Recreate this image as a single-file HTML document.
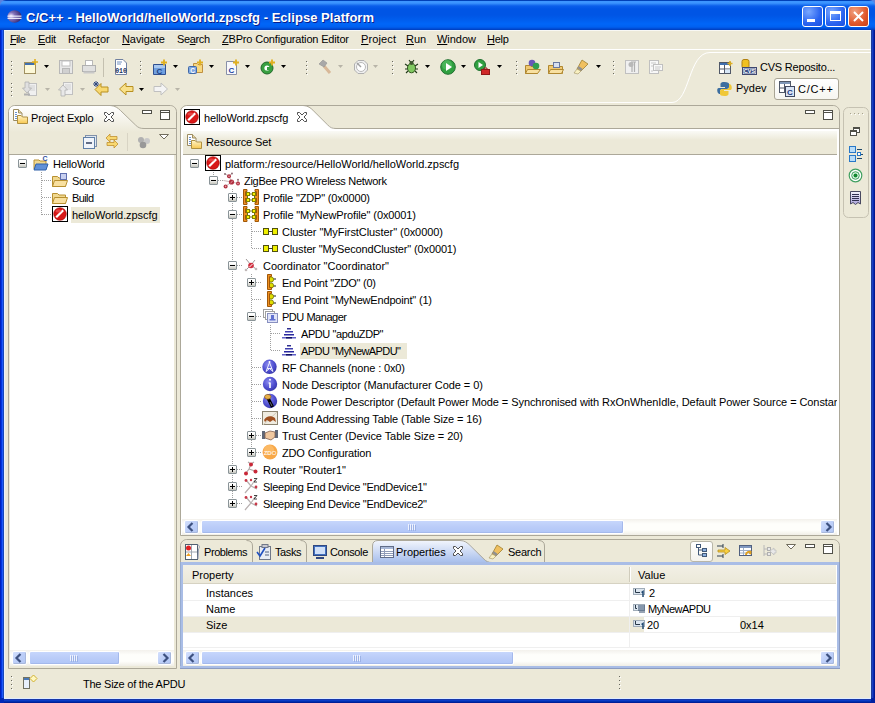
<!DOCTYPE html>
<html><head><meta charset="utf-8">
<style>
*{margin:0;padding:0;box-sizing:border-box}
html,body{width:875px;height:703px;overflow:hidden;background:#ECE9D8}
body{position:relative;font-family:"Liberation Sans",sans-serif;font-size:11px;color:#000}
.a{position:absolute}
.t{position:absolute;white-space:pre;line-height:13px;font-size:11px}
svg{position:absolute;overflow:visible}
</style></head><body>

<div class="a" style="left:0px;top:0px;width:8px;height:8px;background:#5A82E0"></div>
<div class="a" style="left:867px;top:0px;width:8px;height:8px;background:#5A82E0"></div>
<div class="a" style="left:0px;top:0px;width:875px;height:30px;background:linear-gradient(#0040B8 0,#0040B8 1px,#3C95FF 1px,#3C95FF 3px,#0A5EEA 6px,#0055E5 9px,#0055E5 15px,#005CEC 19px,#0066F8 24px,#0060F0 27px,#0048D0 29px,#003DB8 30px);border-radius:6px 6px 0 0"></div>
<div class="a" style="left:0px;top:30px;width:5px;height:673px;background:linear-gradient(90deg,#0020C0 0 1px,#0038E0 1px 2px,#2058F8 2px 3px,#1848B8 3px 4px,#E8F0FF 4px 5px)"></div>
<div class="a" style="left:870px;top:30px;width:5px;height:673px;background:linear-gradient(90deg,#DCEEFF 0 1px,#203C98 1px 2px,#1840C0 2px 3px,#0828B0 3px 4px,#001890 4px 5px)"></div>
<div class="a" style="left:0px;top:698px;width:875px;height:5px;background:linear-gradient(#E0ECFF 0 1px,#1838A8 1px 2px,#0A3CC8 2px 3px,#0030B0 3px 4px,#001E98 4px 5px)"></div>
<div class="a" style="left:0px;top:698px;width:4px;height:5px;background:#0028B8"></div>
<div class="a" style="left:871px;top:698px;width:4px;height:5px;background:#0020A0"></div>
<div class="a" style="left:4px;top:30px;width:867px;height:1px;background:#F8F8F4"></div>
<svg style="left:7px;top:10px" width="15" height="13" viewBox="0 0 15 13"><defs><radialGradient id="eg" cx=".25" cy=".45" r=".8"><stop offset="0" stop-color="#F0E8FF"/><stop offset=".35" stop-color="#8070B8"/><stop offset="1" stop-color="#2C1E68"/></radialGradient></defs><ellipse cx="7.5" cy="6.5" rx="7" ry="6.2" fill="url(#eg)"/><rect x="0.5" y="5.6" width="14" height="1.1" fill="#F4F4FF"/><rect x="0.5" y="7.8" width="14" height="1.1" fill="#F4F4FF"/></svg>
<div class="t" style="left:26px;top:10px;letter-spacing:0.033px;font-size:13px;font-weight:bold;color:#fff;line-height:15px;text-shadow:1px 1px 0 #0A1E8C">C/C++ - HelloWorld/helloWorld.zpscfg - Eclipse Platform</div>
<div class="a" style="left:802px;top:6px;width:21px;height:21px;border:1px solid #fff;border-radius:3px;background:radial-gradient(circle at 30% 25%,#7AA8FF,#2A64F0 60%,#1A50E0)"></div>
<div class="a" style="left:825px;top:6px;width:21px;height:21px;border:1px solid #fff;border-radius:3px;background:radial-gradient(circle at 30% 25%,#7AA8FF,#2A64F0 60%,#1A50E0)"></div>
<div class="a" style="left:848px;top:6px;width:21px;height:21px;border:1px solid #fff;border-radius:3px;background:radial-gradient(circle at 30% 25%,#F0A080,#E0582A 60%,#C84018)"></div>
<div class="a" style="left:807px;top:19px;width:8px;height:3px;background:#fff"></div>
<div class="a" style="left:830px;top:11px;width:11px;height:10px;border:1px solid #fff;border-top-width:3px"></div>
<svg style="left:848px;top:6px" width="21" height="21" viewBox="0 0 21 21"><path d="M6 6L15 15M15 6L6 15" stroke="#fff" stroke-width="2"/></svg>
<div class="t" style="left:10px;top:33px;letter-spacing:-0.650px;"><u>F</u>ile</div>
<div class="t" style="left:38px;top:33px;letter-spacing:-0.290px;"><u>E</u>dit</div>
<div class="t" style="left:68px;top:33px;letter-spacing:0.015px;">Refac<u>t</u>or</div>
<div class="t" style="left:122px;top:33px;letter-spacing:-0.091px;"><u>N</u>avigate</div>
<div class="t" style="left:177px;top:33px;letter-spacing:-0.375px;">Se<u>a</u>rch</div>
<div class="t" style="left:222px;top:33px;letter-spacing:-0.179px;"><u>Z</u>BPro Configuration Editor</div>
<div class="t" style="left:361px;top:33px;letter-spacing:0.125px;"><u>P</u>roject</div>
<div class="t" style="left:406px;top:33px;letter-spacing:-0.002px;"><u>R</u>un</div>
<div class="t" style="left:437px;top:33px;letter-spacing:-0.028px;"><u>W</u>indow</div>
<div class="t" style="left:487px;top:33px;letter-spacing:-0.280px;"><u>H</u>elp</div>
<div class="a" style="left:4px;top:49px;width:867px;height:1px;background:#FFFFFF"></div>
<div class="a" style="left:11px;top:61px;width:1px;height:1px;background:#686860"></div>
<div class="a" style="left:12px;top:62px;width:1px;height:1px;background:#FFFFFF"></div>
<div class="a" style="left:11px;top:65px;width:1px;height:1px;background:#686860"></div>
<div class="a" style="left:12px;top:66px;width:1px;height:1px;background:#FFFFFF"></div>
<div class="a" style="left:11px;top:69px;width:1px;height:1px;background:#686860"></div>
<div class="a" style="left:12px;top:70px;width:1px;height:1px;background:#FFFFFF"></div>
<div class="a" style="left:11px;top:73px;width:1px;height:1px;background:#686860"></div>
<div class="a" style="left:12px;top:74px;width:1px;height:1px;background:#FFFFFF"></div>
<div class="a" style="left:11px;top:83px;width:1px;height:1px;background:#686860"></div>
<div class="a" style="left:12px;top:84px;width:1px;height:1px;background:#FFFFFF"></div>
<div class="a" style="left:11px;top:87px;width:1px;height:1px;background:#686860"></div>
<div class="a" style="left:12px;top:88px;width:1px;height:1px;background:#FFFFFF"></div>
<div class="a" style="left:11px;top:91px;width:1px;height:1px;background:#686860"></div>
<div class="a" style="left:12px;top:92px;width:1px;height:1px;background:#FFFFFF"></div>
<div class="a" style="left:11px;top:95px;width:1px;height:1px;background:#686860"></div>
<div class="a" style="left:12px;top:96px;width:1px;height:1px;background:#FFFFFF"></div>
<div class="a" style="left:140px;top:61px;width:1px;height:1px;background:#686860"></div>
<div class="a" style="left:141px;top:62px;width:1px;height:1px;background:#FFFFFF"></div>
<div class="a" style="left:140px;top:65px;width:1px;height:1px;background:#686860"></div>
<div class="a" style="left:141px;top:66px;width:1px;height:1px;background:#FFFFFF"></div>
<div class="a" style="left:140px;top:69px;width:1px;height:1px;background:#686860"></div>
<div class="a" style="left:141px;top:70px;width:1px;height:1px;background:#FFFFFF"></div>
<div class="a" style="left:140px;top:73px;width:1px;height:1px;background:#686860"></div>
<div class="a" style="left:141px;top:74px;width:1px;height:1px;background:#FFFFFF"></div>
<div class="a" style="left:103px;top:58px;width:1px;height:19px;background:#C4C0B0"></div>
<div class="a" style="left:9px;top:106px;width:167px;height:562px;background:#ECE9D8"></div>
<svg style="left:0px;top:0px" width="875" height="703" viewBox="0 0 875 703"><defs><linearGradient id="tg1" gradientUnits="userSpaceOnUse" x1="0" y1="106" x2="0" y2="132"><stop offset="0" stop-color="#FFFFFF"/><stop offset="1" stop-color="#ECE9D8"/></linearGradient></defs><path d="M9 128V111Q9 106 14 106H110C115.00 106.00 118.00 108.39 120.50 110.78L135.50 124.65C138.00 127.04 140.00 128.00 144.00 128.00H176V154H9Z" fill="url(#tg1)"/><path d="M110 105.5C115.00 105.50 118.00 108.00 120.50 110.50L135.50 125.00C138.00 127.50 140.00 128.50 144.00 128.50H176" fill="none" stroke="#ACA899"/></svg>
<svg style="left:0px;top:0px" width="875" height="703" viewBox="0 0 875 703"><path d="M8.5 668.5V111.5C8.5 108.2 11.8 105.5 14.5 105.5H170.5C173.2 105.5 176.5 108.2 176.5 111.5V668.5H8.5Z" fill="none" stroke="#ACA899" stroke-width="1"/></svg>
<div class="a" style="left:9px;top:154px;width:167px;height:1px;background:#ACA899"></div>
<div class="a" style="left:10px;top:155px;width:164px;height:495px;background:#FFFFFF"></div>
<div class="a" style="left:181px;top:106px;width:658px;height:429px;background:#FFFFFF;border-radius:6px 6px 0 0"></div>
<svg style="left:0px;top:0px" width="875" height="703" viewBox="0 0 875 703"><path d="M303 106C307.85 106.00 310.76 108.39 313.19 110.78L327.75 124.65C330.18 127.04 332.12 128.00 336.00 128.00H839V106H303Z" fill="#ECE9D8"/><path d="M303 105.5C307.85 105.50 310.76 108.00 313.19 110.50L327.75 125.00C330.18 127.50 332.12 128.50 336.00 128.50H839" fill="none" stroke="#ACA899"/></svg>
<svg style="left:0px;top:0px" width="875" height="703" viewBox="0 0 875 703"><path d="M180.5 535.5V111.5C180.5 108.2 183.8 105.5 186.5 105.5H833.5C836.2 105.5 839.5 108.2 839.5 111.5V535.5H180.5Z" fill="none" stroke="#ACA899" stroke-width="1"/></svg>
<div class="a" style="left:183px;top:131px;width:654px;height:23px;background:linear-gradient(#FAFAF6,#ECE9D8 40%,#ECE9D8)"></div>
<div class="a" style="left:183px;top:154px;width:654px;height:1px;background:#ACA899"></div>
<div class="a" style="left:181px;top:540px;width:658px;height:128px;background:#ECE9D8"></div>
<svg style="left:0px;top:0px" width="875" height="703" viewBox="0 0 875 703"><path d="M180.5 668.5V545.5C180.5 542.2 183.8 539.5 186.5 539.5H833.5C836.2 539.5 839.5 542.2 839.5 545.5V668.5H180.5Z" fill="none" stroke="#ACA899" stroke-width="1"/></svg>
<svg style="left:0px;top:0px" width="875" height="703" viewBox="0 0 875 703"><defs><linearGradient id="tg2" x1="0" y1="0" x2="0" y2="1"><stop offset="0" stop-color="#F4F7FD"/><stop offset="1" stop-color="#A9C0EC"/></linearGradient></defs><path d="M372 562V546Q372 540 378 540H460C464.71 540.00 467.53 542.39 469.88 544.78L484.00 558.65C486.35 561.04 488.24 562.00 492.00 562.00Z" fill="url(#tg2)"/><path d="M372.5 562V546Q372.5 540.5 378 540.5H460C464.71 540.50 467.53 542.89 469.88 545.28L484.00 559.15C486.35 561.54 488.24 562.50 492.00 562.50" fill="none" stroke="#ACA899"/></svg>
<svg style="left:0px;top:0px" width="875" height="703" viewBox="0 0 875 703"><path d="M246.5 540.5Q252.5 540.5 252.5 546V562" fill="none" stroke="#ACA899"/></svg>
<svg style="left:0px;top:0px" width="875" height="703" viewBox="0 0 875 703"><path d="M300.5 540.5Q306.5 540.5 306.5 546V562" fill="none" stroke="#ACA899"/></svg>
<svg style="left:0px;top:0px" width="875" height="703" viewBox="0 0 875 703"><path d="M538.5 540.5Q544.5 540.5 544.5 546V562" fill="none" stroke="#ACA899"/></svg>
<div class="a" style="left:183px;top:565px;width:654px;height:101px;background:#FFFFFF"></div>
<svg style="left:0px;top:0px" width="875" height="703" viewBox="0 0 875 703"><rect x="843.5" y="107.5" width="25" height="110" rx="5" fill="#ECE9D8" stroke="#C6C2B2"/></svg>
<div class="a" style="left:11px;top:676px;width:1px;height:1px;background:#686860"></div>
<div class="a" style="left:12px;top:677px;width:1px;height:1px;background:#FFFFFF"></div>
<div class="a" style="left:11px;top:680px;width:1px;height:1px;background:#686860"></div>
<div class="a" style="left:12px;top:681px;width:1px;height:1px;background:#FFFFFF"></div>
<div class="a" style="left:11px;top:684px;width:1px;height:1px;background:#686860"></div>
<div class="a" style="left:12px;top:685px;width:1px;height:1px;background:#FFFFFF"></div>
<div class="a" style="left:11px;top:688px;width:1px;height:1px;background:#686860"></div>
<div class="a" style="left:12px;top:689px;width:1px;height:1px;background:#FFFFFF"></div>
<div class="t" style="left:83px;top:678px;letter-spacing:-0.242px;">The Size of the APDU</div>
<div class="a" style="left:619px;top:676px;width:1px;height:1px;background:#686860"></div>
<div class="a" style="left:620px;top:677px;width:1px;height:1px;background:#FFFFFF"></div>
<div class="a" style="left:619px;top:680px;width:1px;height:1px;background:#686860"></div>
<div class="a" style="left:620px;top:681px;width:1px;height:1px;background:#FFFFFF"></div>
<div class="a" style="left:619px;top:684px;width:1px;height:1px;background:#686860"></div>
<div class="a" style="left:620px;top:685px;width:1px;height:1px;background:#FFFFFF"></div>
<div class="a" style="left:619px;top:688px;width:1px;height:1px;background:#686860"></div>
<div class="a" style="left:620px;top:689px;width:1px;height:1px;background:#FFFFFF"></div>
<div class="a" style="left:214px;top:180px;width:10px;height:1px;background:repeating-linear-gradient(90deg,#A0A0A0 0 1px,transparent 1px 2px)"></div>
<div class="a" style="left:233px;top:197px;width:10px;height:1px;background:repeating-linear-gradient(90deg,#A0A0A0 0 1px,transparent 1px 2px)"></div>
<div class="a" style="left:233px;top:214px;width:10px;height:1px;background:repeating-linear-gradient(90deg,#A0A0A0 0 1px,transparent 1px 2px)"></div>
<div class="a" style="left:252px;top:231px;width:10px;height:1px;background:repeating-linear-gradient(90deg,#A0A0A0 0 1px,transparent 1px 2px)"></div>
<div class="a" style="left:252px;top:248px;width:10px;height:1px;background:repeating-linear-gradient(90deg,#A0A0A0 0 1px,transparent 1px 2px)"></div>
<div class="a" style="left:233px;top:265px;width:10px;height:1px;background:repeating-linear-gradient(90deg,#A0A0A0 0 1px,transparent 1px 2px)"></div>
<div class="a" style="left:252px;top:282px;width:10px;height:1px;background:repeating-linear-gradient(90deg,#A0A0A0 0 1px,transparent 1px 2px)"></div>
<div class="a" style="left:252px;top:299px;width:10px;height:1px;background:repeating-linear-gradient(90deg,#A0A0A0 0 1px,transparent 1px 2px)"></div>
<div class="a" style="left:252px;top:316px;width:10px;height:1px;background:repeating-linear-gradient(90deg,#A0A0A0 0 1px,transparent 1px 2px)"></div>
<div class="a" style="left:271px;top:333px;width:10px;height:1px;background:repeating-linear-gradient(90deg,#A0A0A0 0 1px,transparent 1px 2px)"></div>
<div class="a" style="left:271px;top:350px;width:10px;height:1px;background:repeating-linear-gradient(90deg,#A0A0A0 0 1px,transparent 1px 2px)"></div>
<div class="a" style="left:252px;top:367px;width:10px;height:1px;background:repeating-linear-gradient(90deg,#A0A0A0 0 1px,transparent 1px 2px)"></div>
<div class="a" style="left:252px;top:384px;width:10px;height:1px;background:repeating-linear-gradient(90deg,#A0A0A0 0 1px,transparent 1px 2px)"></div>
<div class="a" style="left:252px;top:401px;width:10px;height:1px;background:repeating-linear-gradient(90deg,#A0A0A0 0 1px,transparent 1px 2px)"></div>
<div class="a" style="left:252px;top:418px;width:10px;height:1px;background:repeating-linear-gradient(90deg,#A0A0A0 0 1px,transparent 1px 2px)"></div>
<div class="a" style="left:252px;top:435px;width:10px;height:1px;background:repeating-linear-gradient(90deg,#A0A0A0 0 1px,transparent 1px 2px)"></div>
<div class="a" style="left:252px;top:452px;width:10px;height:1px;background:repeating-linear-gradient(90deg,#A0A0A0 0 1px,transparent 1px 2px)"></div>
<div class="a" style="left:233px;top:469px;width:10px;height:1px;background:repeating-linear-gradient(90deg,#A0A0A0 0 1px,transparent 1px 2px)"></div>
<div class="a" style="left:233px;top:486px;width:10px;height:1px;background:repeating-linear-gradient(90deg,#A0A0A0 0 1px,transparent 1px 2px)"></div>
<div class="a" style="left:233px;top:503px;width:10px;height:1px;background:repeating-linear-gradient(90deg,#A0A0A0 0 1px,transparent 1px 2px)"></div>
<div class="a" style="left:213px;top:172px;width:1px;height:9px;background:repeating-linear-gradient(#A0A0A0 0 1px,transparent 1px 2px)"></div>
<div class="a" style="left:232px;top:189px;width:1px;height:315px;background:repeating-linear-gradient(#A0A0A0 0 1px,transparent 1px 2px)"></div>
<div class="a" style="left:251px;top:223px;width:1px;height:26px;background:repeating-linear-gradient(#A0A0A0 0 1px,transparent 1px 2px)"></div>
<div class="a" style="left:251px;top:274px;width:1px;height:179px;background:repeating-linear-gradient(#A0A0A0 0 1px,transparent 1px 2px)"></div>
<div class="a" style="left:270px;top:325px;width:1px;height:26px;background:repeating-linear-gradient(#A0A0A0 0 1px,transparent 1px 2px)"></div>
<div class="a" style="left:300px;top:343px;width:107px;height:16px;background:#ECE9D8"></div>
<div class="a" style="left:190px;top:159px;width:9px;height:9px;border:1px solid #8A9498;border-radius:1px;background:linear-gradient(#FFFFFF 20%,#E8E8E4 60%,#C4C4BC)"></div>
<div class="a" style="left:192px;top:163px;width:5px;height:1px;background:#000"></div>
<svg style="left:205px;top:155px" width="16" height="16" viewBox="0 0 16 16"><rect x="0.5" y="0.5" width="15" height="15" fill="#fff" stroke="#000"/><circle cx="8" cy="8" r="6.3" fill="#D81818" stroke="#A00000" stroke-width=".6"/><path fill="none" d="M4.2 11.2L11.2 4.2" stroke="#fff" stroke-width="2.2"/><ellipse cx="6.5" cy="5" rx="3" ry="1.6" fill="#F06060" opacity=".6"/></svg>
<div class="t" style="left:225px;top:158px;letter-spacing:-0.021px;width:612px;overflow:hidden">platform:/resource/HelloWorld/helloWorld.zpscfg</div>
<div class="a" style="left:209px;top:176px;width:9px;height:9px;border:1px solid #8A9498;border-radius:1px;background:linear-gradient(#FFFFFF 20%,#E8E8E4 60%,#C4C4BC)"></div>
<div class="a" style="left:211px;top:180px;width:5px;height:1px;background:#000"></div>
<svg style="left:224px;top:172px" width="16" height="16" viewBox="0 0 16 16"><path fill="none" d="M1 2L5 4L7.5 10L14 11.5M7.5 10L1.5 14.5M8 1.5L5 4M-0.5 8.5L7.5 10M14 7.7L14 11.5" stroke="#C8B8B8" stroke-width="1"/><circle cx="5" cy="4.2" r="2" fill="#B03040"/><circle cx="5" cy="4.2" r=".8" fill="#E8A0A8"/><circle cx="7.5" cy="10" r="2.6" fill="#B03040"/><path fill="none" d="M6.5 11L8.7 9" stroke="#E8A0A8" stroke-width="1"/><circle cx="14" cy="11.6" r="2" fill="#B03040"/><circle cx="14" cy="11.6" r=".8" fill="#E8A0A8"/><circle cx="1.6" cy="14.4" r="2" fill="#B03040"/><circle cx="1.6" cy="14.4" r=".8" fill="#E8A0A8"/><circle cx="1" cy="2" r=".9" fill="#806068"/><circle cx="8" cy="1.5" r=".9" fill="#806068"/><circle cx="14" cy="7.7" r=".9" fill="#806068"/></svg>
<div class="t" style="left:244px;top:175px;letter-spacing:-0.284px;width:593px;overflow:hidden">ZigBee PRO Wireless Network</div>
<div class="a" style="left:228px;top:193px;width:9px;height:9px;border:1px solid #8A9498;border-radius:1px;background:linear-gradient(#FFFFFF 20%,#E8E8E4 60%,#C4C4BC)"></div>
<div class="a" style="left:230px;top:197px;width:5px;height:1px;background:#000"></div>
<div class="a" style="left:232px;top:195px;width:1px;height:5px;background:#000"></div>
<svg style="left:243px;top:189px" width="16" height="16" viewBox="0 0 16 16"><path d="M0.5 0.5H4V2.5H2.5V13.5H4V15.5H0.5Z" fill="#F09020" stroke="#A05808" stroke-width="1"/><path d="M15.5 0.5H12V2.5H13.5V13.5H12V15.5H15.5Z" fill="#F09020" stroke="#A05808" stroke-width="1"/><rect x="2" y="7" width="2" height="2" fill="#F09020"/><rect x="12" y="7" width="2" height="2" fill="#F09020"/><path fill="none" d="M6 5H10M6 11H10M4.5 6.5V9.5M11.5 6.5V9.5" stroke="#707010" stroke-width="1"/><rect x="3.5" y="3.5" width="3" height="3" fill="#F8F000" stroke="#808000" stroke-width="1"/><rect x="9.5" y="3.5" width="3" height="3" fill="#F8F000" stroke="#808000" stroke-width="1"/><rect x="3.5" y="9.5" width="3" height="3" fill="#F8F000" stroke="#808000" stroke-width="1"/><rect x="9.5" y="9.5" width="3" height="3" fill="#F8F000" stroke="#808000" stroke-width="1"/></svg>
<div class="t" style="left:263px;top:192px;letter-spacing:-0.167px;width:574px;overflow:hidden">Profile "ZDP" (0x0000)</div>
<div class="a" style="left:228px;top:210px;width:9px;height:9px;border:1px solid #8A9498;border-radius:1px;background:linear-gradient(#FFFFFF 20%,#E8E8E4 60%,#C4C4BC)"></div>
<div class="a" style="left:230px;top:214px;width:5px;height:1px;background:#000"></div>
<svg style="left:243px;top:206px" width="16" height="16" viewBox="0 0 16 16"><path d="M0.5 0.5H4V2.5H2.5V13.5H4V15.5H0.5Z" fill="#F09020" stroke="#A05808" stroke-width="1"/><path d="M15.5 0.5H12V2.5H13.5V13.5H12V15.5H15.5Z" fill="#F09020" stroke="#A05808" stroke-width="1"/><rect x="2" y="7" width="2" height="2" fill="#F09020"/><rect x="12" y="7" width="2" height="2" fill="#F09020"/><path fill="none" d="M6 5H10M6 11H10M4.5 6.5V9.5M11.5 6.5V9.5" stroke="#707010" stroke-width="1"/><rect x="3.5" y="3.5" width="3" height="3" fill="#F8F000" stroke="#808000" stroke-width="1"/><rect x="9.5" y="3.5" width="3" height="3" fill="#F8F000" stroke="#808000" stroke-width="1"/><rect x="3.5" y="9.5" width="3" height="3" fill="#F8F000" stroke="#808000" stroke-width="1"/><rect x="9.5" y="9.5" width="3" height="3" fill="#F8F000" stroke="#808000" stroke-width="1"/></svg>
<div class="t" style="left:263px;top:209px;letter-spacing:-0.113px;width:574px;overflow:hidden">Profile "MyNewProfile" (0x0001)</div>
<svg style="left:262px;top:223px" width="16" height="16" viewBox="0 0 16 16"><rect x="1.5" y="5.5" width="5" height="6" fill="#F0F000" stroke="#505010"/><rect x="10.5" y="5.5" width="5" height="6" fill="#F0F000" stroke="#505010"/><path fill="none" d="M6.5 8.5H10.5" stroke="#404010"/></svg>
<div class="t" style="left:282px;top:226px;letter-spacing:-0.065px;width:555px;overflow:hidden">Cluster "MyFirstCluster" (0x0000)</div>
<svg style="left:262px;top:240px" width="16" height="16" viewBox="0 0 16 16"><rect x="1.5" y="5.5" width="5" height="6" fill="#F0F000" stroke="#505010"/><rect x="10.5" y="5.5" width="5" height="6" fill="#F0F000" stroke="#505010"/><path fill="none" d="M6.5 8.5H10.5" stroke="#404010"/></svg>
<div class="t" style="left:282px;top:243px;letter-spacing:-0.136px;width:555px;overflow:hidden">Cluster "MySecondCluster" (0x0001)</div>
<div class="a" style="left:228px;top:261px;width:9px;height:9px;border:1px solid #8A9498;border-radius:1px;background:linear-gradient(#FFFFFF 20%,#E8E8E4 60%,#C4C4BC)"></div>
<div class="a" style="left:230px;top:265px;width:5px;height:1px;background:#000"></div>
<svg style="left:243px;top:257px" width="16" height="16" viewBox="0 0 16 16"><path fill="none" d="M3 2L8 8L13 12M8 8L3 13M8 8L12 3" stroke="#A09898" stroke-width="1"/><circle cx="8" cy="8.5" r="2.8" fill="#D03040"/><path fill="none" d="M6.5 10L9.5 7" stroke="#fff" stroke-width="1"/><circle cx="3" cy="13" r="1.3" fill="#C0B8B8"/><circle cx="13" cy="12" r="1.3" fill="#C0B8B8"/></svg>
<div class="t" style="left:263px;top:260px;letter-spacing:0.007px;width:574px;overflow:hidden">Coordinator "Coordinator"</div>
<div class="a" style="left:247px;top:278px;width:9px;height:9px;border:1px solid #8A9498;border-radius:1px;background:linear-gradient(#FFFFFF 20%,#E8E8E4 60%,#C4C4BC)"></div>
<div class="a" style="left:249px;top:282px;width:5px;height:1px;background:#000"></div>
<div class="a" style="left:251px;top:280px;width:1px;height:5px;background:#000"></div>
<svg style="left:262px;top:274px" width="16" height="16" viewBox="0 0 16 16"><path d="M10 5H14M10 12H14" stroke="#202020" stroke-width="1"/><circle cx="9" cy="5.5" r="2.6" fill="#E0E000" stroke="#707000" stroke-width=".8"/><circle cx="9" cy="11.5" r="2.6" fill="#E0E000" stroke="#707000" stroke-width=".8"/><path d="M5.5 0.5H9.5V2.5H7.5V13.5H9.5V15.5H5.5Z" fill="#F09020" stroke="#A05808"/></svg>
<div class="t" style="left:282px;top:277px;letter-spacing:-0.239px;width:555px;overflow:hidden">End Point "ZDO" (0)</div>
<svg style="left:262px;top:291px" width="16" height="16" viewBox="0 0 16 16"><path d="M10 5H14M10 12H14" stroke="#202020" stroke-width="1"/><circle cx="9" cy="5.5" r="2.6" fill="#E0E000" stroke="#707000" stroke-width=".8"/><circle cx="9" cy="11.5" r="2.6" fill="#E0E000" stroke="#707000" stroke-width=".8"/><path d="M5.5 0.5H9.5V2.5H7.5V13.5H9.5V15.5H5.5Z" fill="#F09020" stroke="#A05808"/></svg>
<div class="t" style="left:282px;top:294px;letter-spacing:-0.185px;width:555px;overflow:hidden">End Point "MyNewEndpoint" (1)</div>
<div class="a" style="left:247px;top:312px;width:9px;height:9px;border:1px solid #8A9498;border-radius:1px;background:linear-gradient(#FFFFFF 20%,#E8E8E4 60%,#C4C4BC)"></div>
<div class="a" style="left:249px;top:316px;width:5px;height:1px;background:#000"></div>
<svg style="left:262px;top:308px" width="16" height="16" viewBox="0 0 16 16"><rect x="1.5" y="1.5" width="9" height="8" fill="#fff" stroke="#A0A0A0"/><rect x="3.5" y="3.5" width="9" height="8" fill="#fff" stroke="#A0A0A0"/><rect x="5.5" y="5.5" width="10" height="9" fill="#E0E4F8" stroke="#8890C0"/><rect x="9" y="7" width="3" height="4" fill="#6070D0"/><rect x="7.5" y="11" width="6" height="1.5" fill="#6070D0"/></svg>
<div class="t" style="left:282px;top:311px;letter-spacing:-0.470px;width:555px;overflow:hidden">PDU Manager</div>
<svg style="left:281px;top:325px" width="16" height="16" viewBox="0 0 16 16"><rect x="6" y="3" width="4" height="1.5" fill="#303090"/><rect x="4" y="6" width="8" height="1.5" fill="#4040B0"/><rect x="3" y="9" width="10" height="1.5" fill="#2828A0"/><rect x="1" y="12" width="14" height="1.5" fill="#6060C8"/><rect x="5" y="12" width="6" height="1.5" fill="#101060"/></svg>
<div class="t" style="left:301px;top:328px;letter-spacing:-0.416px;width:536px;overflow:hidden">APDU "apduZDP"</div>
<svg style="left:281px;top:342px" width="16" height="16" viewBox="0 0 16 16"><rect x="6" y="3" width="4" height="1.5" fill="#303090"/><rect x="4" y="6" width="8" height="1.5" fill="#4040B0"/><rect x="3" y="9" width="10" height="1.5" fill="#2828A0"/><rect x="1" y="12" width="14" height="1.5" fill="#6060C8"/><rect x="5" y="12" width="6" height="1.5" fill="#101060"/></svg>
<div class="t" style="left:301px;top:345px;letter-spacing:-0.578px;width:536px;overflow:hidden">APDU "MyNewAPDU"</div>
<svg style="left:262px;top:359px" width="16" height="16" viewBox="0 0 16 16"><defs><radialGradient id="bc" cx=".4" cy=".35" r=".7"><stop offset="0" stop-color="#8C8CF0"/><stop offset=".6" stop-color="#5050D0"/><stop offset="1" stop-color="#3434A8"/></radialGradient></defs><circle cx="7.5" cy="7.8" r="7.2" fill="url(#bc)"/><path fill="none" d="M7.5 3.5L4 12.5M7.5 3.5L11 12.5M5.2 9.5L9.8 9.5M4 12.5L7.5 9.5L11 12.5" stroke="#F0F0FF" stroke-width="1"/><circle cx="7.5" cy="3" r="1" fill="#fff"/></svg>
<div class="t" style="left:282px;top:362px;letter-spacing:-0.128px;width:555px;overflow:hidden">RF Channels (none : 0x0)</div>
<svg style="left:262px;top:376px" width="16" height="16" viewBox="0 0 16 16"><circle cx="8" cy="8" r="7.2" fill="url(#bc)"/><rect x="7.2" y="6.5" width="1.6" height="5.5" fill="#fff"/><rect x="6.5" y="6.5" width="1.5" height="1" fill="#fff"/><circle cx="8" cy="3.8" r="1" fill="#fff"/></svg>
<div class="t" style="left:282px;top:379px;letter-spacing:-0.044px;width:555px;overflow:hidden">Node Descriptor (Manufacturer Code = 0)</div>
<svg style="left:262px;top:393px" width="16" height="16" viewBox="0 0 16 16"><circle cx="8" cy="8" r="7.2" fill="url(#bc)"/><path fill="none" d="M6 5L10.5 14" stroke="#000" stroke-width="3.2"/><path fill="none" d="M8 9L10 13" stroke="#8080A0" stroke-width=".8"/><ellipse cx="5.8" cy="3.8" rx="3.2" ry="2.4" fill="#E8B048" stroke="#805010" stroke-width=".6"/></svg>
<div class="t" style="left:282px;top:396px;letter-spacing:-0.078px;width:555px;overflow:hidden">Node Power Descriptor (Default Power Mode = Synchronised with RxOnWhenIdle, Default Power Source = Constant Power)</div>
<svg style="left:262px;top:410px" width="16" height="16" viewBox="0 0 16 16"><rect x="0.5" y="1.5" width="15" height="13" fill="#F0ECE0" stroke="#8C8470"/><path fill="none" d="M1 15L15 2" stroke="#D0C8B8"/><path d="M2 10C4 6 9 5 13 8L14 12L11 10L8 12L5 10L3 12Z" fill="#A05020"/></svg>
<div class="t" style="left:282px;top:413px;letter-spacing:-0.112px;width:555px;overflow:hidden">Bound Addressing Table (Table Size = 16)</div>
<div class="a" style="left:247px;top:431px;width:9px;height:9px;border:1px solid #8A9498;border-radius:1px;background:linear-gradient(#FFFFFF 20%,#E8E8E4 60%,#C4C4BC)"></div>
<div class="a" style="left:249px;top:435px;width:5px;height:1px;background:#000"></div>
<div class="a" style="left:251px;top:433px;width:1px;height:5px;background:#000"></div>
<svg style="left:262px;top:427px" width="16" height="16" viewBox="0 0 16 16"><rect x="0" y="4" width="3" height="8" fill="#606878"/><rect x="13" y="3" width="3" height="8" fill="#606878"/><path d="M3 6L8 4L13 5V10L9 13L3 11Z" fill="#F0C8A0" stroke="#806050" stroke-width=".8"/></svg>
<div class="t" style="left:282px;top:430px;letter-spacing:-0.059px;width:555px;overflow:hidden">Trust Center (Device Table Size = 20)</div>
<div class="a" style="left:247px;top:448px;width:9px;height:9px;border:1px solid #8A9498;border-radius:1px;background:linear-gradient(#FFFFFF 20%,#E8E8E4 60%,#C4C4BC)"></div>
<div class="a" style="left:249px;top:452px;width:5px;height:1px;background:#000"></div>
<div class="a" style="left:251px;top:450px;width:1px;height:5px;background:#000"></div>
<svg style="left:262px;top:444px" width="16" height="16" viewBox="0 0 16 16"><circle cx="8" cy="8" r="7.5" fill="#F8A848"/><circle cx="7" cy="6" r="5" fill="#FCC070" opacity=".7"/><text x="8" y="10.5" font-size="6" font-family="Liberation Sans" fill="#fff" text-anchor="middle">ZDO</text></svg>
<div class="t" style="left:282px;top:447px;letter-spacing:-0.145px;width:555px;overflow:hidden">ZDO Configuration</div>
<div class="a" style="left:228px;top:465px;width:9px;height:9px;border:1px solid #8A9498;border-radius:1px;background:linear-gradient(#FFFFFF 20%,#E8E8E4 60%,#C4C4BC)"></div>
<div class="a" style="left:230px;top:469px;width:5px;height:1px;background:#000"></div>
<div class="a" style="left:232px;top:467px;width:1px;height:5px;background:#000"></div>
<svg style="left:243px;top:461px" width="16" height="16" viewBox="0 0 16 16"><path fill="none" d="M8 3L6 8L3 12M6 8L12 10M8 3L11 1M8 3L5 1" stroke="#B0A8A8" stroke-width="1.2"/><circle cx="8" cy="3.5" r="2" fill="#C82838"/><circle cx="3" cy="12.5" r="2" fill="#C82838"/><circle cx="12.5" cy="10.5" r="2" fill="#C82838"/></svg>
<div class="t" style="left:263px;top:464px;width:574px;overflow:hidden">Router "Router1"</div>
<div class="a" style="left:228px;top:482px;width:9px;height:9px;border:1px solid #8A9498;border-radius:1px;background:linear-gradient(#FFFFFF 20%,#E8E8E4 60%,#C4C4BC)"></div>
<div class="a" style="left:230px;top:486px;width:5px;height:1px;background:#000"></div>
<div class="a" style="left:232px;top:484px;width:1px;height:5px;background:#000"></div>
<svg style="left:243px;top:478px" width="16" height="16" viewBox="0 0 16 16"><path fill="none" d="M3 2L8 8L2 15M8 8L14 11M8 8L12 2" stroke="#B8B0B0" stroke-width="1.2"/><circle cx="3" cy="2.5" r="1.4" fill="#C83848"/><circle cx="8" cy="2" r="1.2" fill="#C83848"/><circle cx="13" cy="9" r="1.4" fill="#C83848"/><path d="M11 0.5H14L11 4H14" stroke="#303030" stroke-width=".9" fill="none"/></svg>
<div class="t" style="left:263px;top:481px;letter-spacing:-0.268px;width:574px;overflow:hidden">Sleeping End Device "EndDevice1"</div>
<div class="a" style="left:228px;top:499px;width:9px;height:9px;border:1px solid #8A9498;border-radius:1px;background:linear-gradient(#FFFFFF 20%,#E8E8E4 60%,#C4C4BC)"></div>
<div class="a" style="left:230px;top:503px;width:5px;height:1px;background:#000"></div>
<div class="a" style="left:232px;top:501px;width:1px;height:5px;background:#000"></div>
<svg style="left:243px;top:495px" width="16" height="16" viewBox="0 0 16 16"><path fill="none" d="M3 2L8 8L2 15M8 8L14 11M8 8L12 2" stroke="#B8B0B0" stroke-width="1.2"/><circle cx="3" cy="2.5" r="1.4" fill="#C83848"/><circle cx="8" cy="2" r="1.2" fill="#C83848"/><circle cx="13" cy="9" r="1.4" fill="#C83848"/><path d="M11 0.5H14L11 4H14" stroke="#303030" stroke-width=".9" fill="none"/></svg>
<div class="t" style="left:263px;top:498px;letter-spacing:-0.268px;width:574px;overflow:hidden">Sleeping End Device "EndDevice2"</div>
<div class="a" style="left:41px;top:172px;width:1px;height:43px;background:repeating-linear-gradient(#A0A0A0 0 1px,transparent 1px 2px)"></div>
<div class="a" style="left:42px;top:180px;width:10px;height:1px;background:repeating-linear-gradient(90deg,#A0A0A0 0 1px,transparent 1px 2px)"></div>
<div class="a" style="left:42px;top:197px;width:10px;height:1px;background:repeating-linear-gradient(90deg,#A0A0A0 0 1px,transparent 1px 2px)"></div>
<div class="a" style="left:42px;top:214px;width:10px;height:1px;background:repeating-linear-gradient(90deg,#A0A0A0 0 1px,transparent 1px 2px)"></div>
<div class="a" style="left:18px;top:159px;width:9px;height:9px;border:1px solid #8A9498;border-radius:1px;background:linear-gradient(#FFFFFF 20%,#E8E8E4 60%,#C4C4BC)"></div>
<div class="a" style="left:20px;top:163px;width:5px;height:1px;background:#000"></div>
<svg style="left:33px;top:155px" width="16" height="16" viewBox="0 0 16 16"><path d="M1 5H6L7 6H13V14H1Z" fill="#F0D890" stroke="#B89030"/><path d="M3 9H15L13 15H1Z" fill="#6090D8" stroke="#3060A8"/><text x="12" y="6" font-size="7" font-weight="bold" font-family="Liberation Sans" fill="#3050A0" text-anchor="middle">C</text></svg>
<div class="t" style="left:53px;top:158px;letter-spacing:-0.233px;">HelloWorld</div>
<svg style="left:52px;top:172px" width="16" height="16" viewBox="0 0 16 16"><path d="M0.5 4.5H5.5L7 6H13.5V14.5H0.5Z" fill="#F0D890" stroke="#B89030"/><path d="M2.5 8.5H15.5L13.5 14.5H0.5Z" fill="#F8E0A0" stroke="#B89030"/><rect x="8.5" y="1.5" width="6" height="6" fill="#C8D0F0" stroke="#6070B0"/></svg>
<div class="t" style="left:72px;top:175px;letter-spacing:-0.332px;">Source</div>
<svg style="left:52px;top:189px" width="16" height="16" viewBox="0 0 16 16"><path d="M0.5 4.5H5.5L7 6H13.5V14.5H0.5Z" fill="#F0D890" stroke="#B89030"/><path d="M2.5 8.5H15.5L13.5 14.5H0.5Z" fill="#F8E0A0" stroke="#B89030"/></svg>
<div class="t" style="left:72px;top:192px;letter-spacing:-0.592px;">Build</div>
<div class="a" style="left:71px;top:207px;width:89px;height:16px;background:#ECE9D8"></div>
<svg style="left:52px;top:206px" width="16" height="16" viewBox="0 0 16 16"><rect x="0.5" y="0.5" width="15" height="15" fill="#fff" stroke="#000"/><circle cx="8" cy="8" r="6.3" fill="#D81818" stroke="#A00000" stroke-width=".6"/><path fill="none" d="M4.2 11.2L11.2 4.2" stroke="#fff" stroke-width="2.2"/><ellipse cx="6.5" cy="5" rx="3" ry="1.6" fill="#F06060" opacity=".6"/></svg>
<div class="t" style="left:72px;top:209px;letter-spacing:-0.064px;">helloWorld.zpscfg</div>
<svg style="left:13px;top:109px" width="16" height="16" viewBox="0 0 16 16"><path d="M0.5 0.5H5.5L9 4V11.5H0.5Z" fill="#FFFFFF" stroke="#9C8C60"/><path d="M5.5 0.5V4H9" fill="#E8D8A8" stroke="#9C8C60"/><path d="M2 3.5H4M2 5.5H4M2 7.5H4M2 9.5H4" stroke="#6890D0" stroke-width="1"/><defs><linearGradient id="fg" x1="0" y1="0" x2="0" y2="1"><stop offset="0" stop-color="#FFF4C8"/><stop offset="1" stop-color="#F8C850"/></linearGradient></defs><path d="M4.5 6.5H8L9.5 8H14.5V14.5H4.5Z" fill="url(#fg)" stroke="#B09040"/></svg>
<div class="t" style="left:31px;top:112px;letter-spacing:-0.176px;">Project Explo</div>
<svg style="left:104px;top:112px" width="10" height="10" viewBox="0 0 10 10"><path d="M0.5 0.5H2.5L5 3L7.5 0.5H9.5V2.5L7 5L9.5 7.5V9.5H7.5L5 7L2.5 9.5H0.5V7.5L3 5L0.5 2.5Z" fill="#FFFFFF" stroke="#505050" stroke-width="1"/></svg>
<div class="a" style="left:142px;top:110px;width:10px;height:4px;border:1px solid #505048;background:#fff"></div>
<div class="a" style="left:160px;top:110px;width:10px;height:10px;border:1px solid #505048;background:#fff"></div>
<div class="a" style="left:161px;top:112px;width:8px;height:1px;background:#505048"></div>
<svg style="left:83px;top:135px" width="14" height="14" viewBox="0 0 14 14"><rect x="2.5" y="0.5" width="11" height="11" fill="#E0E8F0" stroke="#8090A8"/><rect x="0.5" y="2.5" width="11" height="11" fill="#F0F4FA" stroke="#6080A8"/><path fill="none" d="M3 8H9" stroke="#304060" stroke-width="1.5"/></svg>
<svg style="left:104px;top:133px" width="16" height="16" viewBox="0 0 16 16"><path d="M2 5L6 1V3.5H13V6.5H6V9Z" fill="#F8D870" stroke="#C09030" stroke-width=".8"/><path d="M14 11L10 7V9.5H3V12.5H10V15Z" fill="#F8D870" stroke="#C09030" stroke-width=".8"/></svg>
<div class="a" style="left:127px;top:133px;width:1px;height:18px;background:#D8D4C4"></div>
<svg style="left:136px;top:135px" width="16" height="14" viewBox="0 0 16 14"><circle cx="5" cy="5" r="3" fill="#B0B0B0"/><circle cx="11" cy="6" r="3" fill="#C8C8C8"/><circle cx="7" cy="10" r="3.3" fill="#989898"/></svg>
<svg style="left:159px;top:134px" width="10" height="6" viewBox="0 0 10 6"><path d="M0.5 0.5H9.5L5 5Z" fill="#fff" stroke="#706C5C"/></svg>
<svg style="left:184px;top:109px" width="16" height="16" viewBox="0 0 16 16"><rect x="0.5" y="0.5" width="15" height="15" fill="#fff" stroke="#000"/><circle cx="8" cy="8" r="6.3" fill="#D81818" stroke="#A00000" stroke-width=".6"/><path fill="none" d="M4.2 11.2L11.2 4.2" stroke="#fff" stroke-width="2.2"/><ellipse cx="6.5" cy="5" rx="3" ry="1.6" fill="#F06060" opacity=".6"/></svg>
<div class="t" style="left:204px;top:112px;letter-spacing:-0.145px;">helloWorld.zpscfg</div>
<svg style="left:297px;top:112px" width="10" height="10" viewBox="0 0 10 10"><path d="M0.5 0.5H2.5L5 3L7.5 0.5H9.5V2.5L7 5L9.5 7.5V9.5H7.5L5 7L2.5 9.5H0.5V7.5L3 5L0.5 2.5Z" fill="#FFFFFF" stroke="#505050" stroke-width="1"/></svg>
<div class="a" style="left:805px;top:110px;width:10px;height:4px;border:1px solid #505048;background:#fff"></div>
<div class="a" style="left:823px;top:110px;width:10px;height:10px;border:1px solid #505048;background:#fff"></div>
<div class="a" style="left:824px;top:112px;width:8px;height:1px;background:#505048"></div>
<svg style="left:187px;top:134px" width="16" height="16" viewBox="0 0 16 16"><path d="M0.5 0.5H5.5L9 4V11.5H0.5Z" fill="#FFFFFF" stroke="#9C8C60"/><path d="M5.5 0.5V4H9" fill="#E8D8A8" stroke="#9C8C60"/><path d="M2 3.5H4M2 5.5H4M2 7.5H4M2 9.5H4" stroke="#6890D0" stroke-width="1"/><defs><linearGradient id="fg" x1="0" y1="0" x2="0" y2="1"><stop offset="0" stop-color="#FFF4C8"/><stop offset="1" stop-color="#F8C850"/></linearGradient></defs><path d="M4.5 6.5H8L9.5 8H14.5V14.5H4.5Z" fill="url(#fg)" stroke="#B09040"/></svg>
<div class="t" style="left:206px;top:136px;letter-spacing:-0.132px;">Resource Set</div>
<svg style="left:185px;top:544px" width="16" height="16" viewBox="0 0 16 16"><rect x="0.5" y="0.5" width="12" height="15" fill="#fff" stroke="#506070"/><path fill="none" d="M6.5 1V15M1 8H12" stroke="#A0A8B0"/><circle cx="3.5" cy="4" r="2.5" fill="#E02020"/><path d="M1 12L3.5 9L6 12Z" fill="#F0A020"/><path d="M12.5 1C15 1 15 4 13.5 5L13 15" stroke="#98A0B8" fill="none"/></svg>
<div class="t" style="left:204px;top:546px;letter-spacing:-0.424px;">Problems</div>
<svg style="left:256px;top:544px" width="16" height="16" viewBox="0 0 16 16"><rect x="3.5" y="2.5" width="11" height="13" fill="#E8ECF4" stroke="#707888"/><rect x="6" y="0.5" width="6" height="3" fill="#C8C8D0" stroke="#707888"/><path d="M1 8L4 12L9 4" stroke="#2050C0" stroke-width="1.6" fill="none"/><path fill="none" d="M9 8H13M9 11H13" stroke="#506080"/></svg>
<div class="t" style="left:275px;top:546px;letter-spacing:-0.381px;">Tasks</div>
<svg style="left:312px;top:544px" width="16" height="16" viewBox="0 0 16 16"><rect x="1.5" y="1.5" width="13" height="10" fill="#4070C0" stroke="#304880"/><rect x="3" y="3" width="10" height="7" fill="#D0E0F8"/><path fill="none" d="M4 14H12" stroke="#304880" stroke-width="2"/></svg>
<div class="t" style="left:330px;top:546px;letter-spacing:-0.343px;">Console</div>
<svg style="left:379px;top:544px" width="16" height="16" viewBox="0 0 16 16"><rect x="1.5" y="2.5" width="13" height="11" fill="#fff" stroke="#606C88"/><rect x="2" y="3" width="12" height="2" fill="#A8B8D8"/><path fill="none" d="M2 7.5H14M2 9.5H14M2 11.5H14M5.5 5V13" stroke="#909CB8"/></svg>
<div class="t" style="left:396px;top:546px;letter-spacing:-0.049px;">Properties</div>
<svg style="left:453px;top:546px" width="10" height="10" viewBox="0 0 10 10"><path d="M0.5 0.5H2.5L5 3L7.5 0.5H9.5V2.5L7 5L9.5 7.5V9.5H7.5L5 7L2.5 9.5H0.5V7.5L3 5L0.5 2.5Z" fill="#FFFFFF" stroke="#505050" stroke-width="1"/></svg>
<svg style="left:488px;top:544px" width="16" height="16" viewBox="0 0 16 16"><path d="M9 1L15 5L8 12L4 10Z" fill="#F0C060" stroke="#A08030" stroke-width=".8"/><path d="M4 10L8 12L5 15L1 14Z" fill="#F8F0C0" stroke="#A09060" stroke-width=".6"/><path fill="none" d="M5 8L9 11" stroke="#909090" stroke-width="2.5"/></svg>
<div class="t" style="left:508px;top:546px;letter-spacing:-0.272px;">Search</div>
<div class="a" style="left:10px;top:650px;width:164px;height:16px;background:linear-gradient(#F3F1EC,#FEFEFB 30%,#FEFEFB 70%,#F0EEE6)"></div>
<div class="a" style="left:12px;top:651px;width:15px;height:14px;border:1px solid #FFFFFF;border-radius:2px;background:linear-gradient(135deg,#D4E0FC,#BCCEF8 50%,#B4C8F4);box-shadow:inset -1px -1px 0 #A8B8DC"></div>
<svg style="left:12px;top:651px" width="15" height="14" viewBox="0 0 15 14"><path d="M8.5 3L4.5 7L8.5 11" stroke="#3D5180" stroke-width="2.2" fill="none"/></svg>
<div class="a" style="left:157px;top:651px;width:15px;height:14px;border:1px solid #FFFFFF;border-radius:2px;background:linear-gradient(135deg,#D4E0FC,#BCCEF8 50%,#B4C8F4);box-shadow:inset -1px -1px 0 #A8B8DC"></div>
<svg style="left:157px;top:651px" width="15" height="14" viewBox="0 0 15 14"><path d="M6.5 3L10.5 7L6.5 11" stroke="#3D5180" stroke-width="2.2" fill="none"/></svg>
<div class="a" style="left:29px;top:651px;width:91px;height:14px;border:1px solid #FFFFFF;border-radius:2px;background:linear-gradient(#C6D6FC,#BACCF8 50%,#B0C6F8);box-shadow:inset -1px -1px 0 #A4B9EC"></div>
<div class="a" style="left:70px;top:655px;width:1px;height:6px;background:#EEF2FE"></div>
<div class="a" style="left:71px;top:656px;width:1px;height:6px;background:#9CB2E6"></div>
<div class="a" style="left:72px;top:655px;width:1px;height:6px;background:#EEF2FE"></div>
<div class="a" style="left:73px;top:656px;width:1px;height:6px;background:#9CB2E6"></div>
<div class="a" style="left:74px;top:655px;width:1px;height:6px;background:#EEF2FE"></div>
<div class="a" style="left:75px;top:656px;width:1px;height:6px;background:#9CB2E6"></div>
<div class="a" style="left:76px;top:655px;width:1px;height:6px;background:#EEF2FE"></div>
<div class="a" style="left:77px;top:656px;width:1px;height:6px;background:#9CB2E6"></div>
<div class="a" style="left:182px;top:519px;width:655px;height:16px;background:linear-gradient(#F3F1EC,#FEFEFB 30%,#FEFEFB 70%,#F0EEE6)"></div>
<div class="a" style="left:184px;top:520px;width:15px;height:14px;border:1px solid #FFFFFF;border-radius:2px;background:linear-gradient(135deg,#D4E0FC,#BCCEF8 50%,#B4C8F4);box-shadow:inset -1px -1px 0 #A8B8DC"></div>
<svg style="left:184px;top:520px" width="15" height="14" viewBox="0 0 15 14"><path d="M8.5 3L4.5 7L8.5 11" stroke="#3D5180" stroke-width="2.2" fill="none"/></svg>
<div class="a" style="left:820px;top:520px;width:15px;height:14px;border:1px solid #FFFFFF;border-radius:2px;background:linear-gradient(135deg,#D4E0FC,#BCCEF8 50%,#B4C8F4);box-shadow:inset -1px -1px 0 #A8B8DC"></div>
<svg style="left:820px;top:520px" width="15" height="14" viewBox="0 0 15 14"><path d="M6.5 3L10.5 7L6.5 11" stroke="#3D5180" stroke-width="2.2" fill="none"/></svg>
<div class="a" style="left:201px;top:520px;width:423px;height:14px;border:1px solid #FFFFFF;border-radius:2px;background:linear-gradient(#C6D6FC,#BACCF8 50%,#B0C6F8);box-shadow:inset -1px -1px 0 #A4B9EC"></div>
<div class="a" style="left:408px;top:524px;width:1px;height:6px;background:#EEF2FE"></div>
<div class="a" style="left:409px;top:525px;width:1px;height:6px;background:#9CB2E6"></div>
<div class="a" style="left:410px;top:524px;width:1px;height:6px;background:#EEF2FE"></div>
<div class="a" style="left:411px;top:525px;width:1px;height:6px;background:#9CB2E6"></div>
<div class="a" style="left:412px;top:524px;width:1px;height:6px;background:#EEF2FE"></div>
<div class="a" style="left:413px;top:525px;width:1px;height:6px;background:#9CB2E6"></div>
<div class="a" style="left:414px;top:524px;width:1px;height:6px;background:#EEF2FE"></div>
<div class="a" style="left:415px;top:525px;width:1px;height:6px;background:#9CB2E6"></div>
<div class="a" style="left:183px;top:650px;width:654px;height:16px;background:linear-gradient(#F3F1EC,#FEFEFB 30%,#FEFEFB 70%,#F0EEE6)"></div>
<div class="a" style="left:185px;top:651px;width:15px;height:14px;border:1px solid #FFFFFF;border-radius:2px;background:linear-gradient(135deg,#D4E0FC,#BCCEF8 50%,#B4C8F4);box-shadow:inset -1px -1px 0 #A8B8DC"></div>
<svg style="left:185px;top:651px" width="15" height="14" viewBox="0 0 15 14"><path d="M8.5 3L4.5 7L8.5 11" stroke="#3D5180" stroke-width="2.2" fill="none"/></svg>
<div class="a" style="left:820px;top:651px;width:15px;height:14px;border:1px solid #FFFFFF;border-radius:2px;background:linear-gradient(135deg,#D4E0FC,#BCCEF8 50%,#B4C8F4);box-shadow:inset -1px -1px 0 #A8B8DC"></div>
<svg style="left:820px;top:651px" width="15" height="14" viewBox="0 0 15 14"><path d="M6.5 3L10.5 7L6.5 11" stroke="#3D5180" stroke-width="2.2" fill="none"/></svg>
<div class="a" style="left:201px;top:651px;width:313px;height:14px;border:1px solid #FFFFFF;border-radius:2px;background:linear-gradient(#C6D6FC,#BACCF8 50%,#B0C6F8);box-shadow:inset -1px -1px 0 #A4B9EC"></div>
<div class="a" style="left:353px;top:655px;width:1px;height:6px;background:#EEF2FE"></div>
<div class="a" style="left:354px;top:656px;width:1px;height:6px;background:#9CB2E6"></div>
<div class="a" style="left:355px;top:655px;width:1px;height:6px;background:#EEF2FE"></div>
<div class="a" style="left:356px;top:656px;width:1px;height:6px;background:#9CB2E6"></div>
<div class="a" style="left:357px;top:655px;width:1px;height:6px;background:#EEF2FE"></div>
<div class="a" style="left:358px;top:656px;width:1px;height:6px;background:#9CB2E6"></div>
<div class="a" style="left:359px;top:655px;width:1px;height:6px;background:#EEF2FE"></div>
<div class="a" style="left:360px;top:656px;width:1px;height:6px;background:#9CB2E6"></div>
<div class="a" style="left:180px;top:562px;width:660px;height:3px;background:#A9BDE6"></div>
<div class="a" style="left:180px;top:562px;width:3px;height:107px;background:linear-gradient(90deg,#98ACD0 0 1px,#A9BDE6 1px)"></div>
<div class="a" style="left:837px;top:562px;width:3px;height:107px;background:linear-gradient(90deg,#A9BDE6 0 2px,#8C9CC0 2px)"></div>
<div class="a" style="left:180px;top:666px;width:660px;height:3px;background:linear-gradient(#A9BDE6 0 2px,#8C9CC0 2px)"></div>
<div class="a" style="left:183px;top:565px;width:653px;height:19px;background:linear-gradient(#F2F0E6,#EBE8D8)"></div>
<div class="a" style="left:183px;top:583px;width:653px;height:1px;background:#D6D2C2"></div>
<div class="a" style="left:629px;top:567px;width:1px;height:15px;background:#D0CCBC"></div>
<div class="a" style="left:630px;top:567px;width:1px;height:15px;background:#FFFFFF"></div>
<div class="t" style="left:192px;top:569px;">Property</div>
<div class="t" style="left:638px;top:569px;">Value</div>
<div class="a" style="left:183px;top:600px;width:653px;height:1px;background:#EFEFEF"></div>
<div class="t" style="left:206px;top:587px;">Instances</div>
<div class="a" style="left:183px;top:616px;width:653px;height:1px;background:#EFEFEF"></div>
<div class="t" style="left:206px;top:603px;">Name</div>
<div class="a" style="left:183px;top:617px;width:653px;height:15px;background:#ECE9D8"></div>
<div class="a" style="left:183px;top:632px;width:653px;height:1px;background:#EFEFEF"></div>
<div class="t" style="left:206px;top:619px;">Size</div>
<div class="a" style="left:629px;top:584px;width:1px;height:64px;background:#EFEFEF"></div>
<div class="a" style="left:183px;top:647px;width:653px;height:1px;background:#EFEFEF"></div>
<div class="a" style="left:644px;top:617px;width:96px;height:15px;background:#FFFFFF"></div>
<svg style="left:632px;top:587px" width="16" height="16" viewBox="0 0 16 16"><rect x="1.5" y="1.5" width="11" height="6" fill="#DCE6F0" stroke="#A0ACB8"/><path d="M3.5 2V5.5H8" stroke="#283848" fill="none"/><path d="M9.5 5.5L11 4.5V10" stroke="#204870" stroke-width="1.5" fill="none"/></svg>
<div class="t" style="left:649px;top:587px;">2</div>
<svg style="left:632px;top:603px" width="16" height="16" viewBox="0 0 16 16"><rect x="1.5" y="1.5" width="11" height="6" fill="#DCE6F0" stroke="#A0ACB8"/><path d="M3.5 2V5.5H5" stroke="#283848" fill="none"/><path fill="none" d="M6 3H13M6 5H13M6 7H13M7 9H13" stroke="#304868" stroke-width="1"/></svg>
<div class="t" style="left:648px;top:603px;letter-spacing:-0.529px;">MyNewAPDU</div>
<svg style="left:632px;top:619px" width="16" height="16" viewBox="0 0 16 16"><rect x="1.5" y="1.5" width="11" height="6" fill="#DCE6F0" stroke="#A0ACB8"/><path d="M3.5 2V5.5H8" stroke="#283848" fill="none"/><path d="M9.5 5.5L11 4.5V10" stroke="#204870" stroke-width="1.5" fill="none"/></svg>
<div class="t" style="left:647px;top:619px;">20</div>
<div class="t" style="left:740px;top:619px;">0x14</div>
<div class="a" style="left:690px;top:541px;width:23px;height:21px;border:1px solid #B8B6A8;border-radius:3px;background:linear-gradient(#FFFFFF,#F4F3EE)"></div>
<svg style="left:694px;top:543px" width="16" height="16" viewBox="0 0 16 16"><path fill="none" d="M4.5 3V12M4.5 7H8M4.5 12H8" stroke="#405878"/><rect x="2.5" y="1.5" width="4" height="3" fill="#fff" stroke="#405878"/><rect x="8.5" y="5.5" width="4" height="3" fill="#8CB0E0" stroke="#405878"/><rect x="8.5" y="10.5" width="4" height="3" fill="#8CB0E0" stroke="#405878"/></svg>
<svg style="left:716px;top:543px" width="16" height="16" viewBox="0 0 16 16"><path fill="none" d="M1 3H7M1 13H7M7 1V5M7 11V15" stroke="#304050"/><path d="M2 7H9V4.5L14 8L9 11.5V9H2Z" fill="#F8D040" stroke="#B89020" stroke-width=".8"/></svg>
<svg style="left:738px;top:543px" width="16" height="16" viewBox="0 0 16 16"><rect x="1.5" y="2.5" width="12" height="10" fill="#fff" stroke="#506080"/><rect x="2" y="3" width="11" height="2" fill="#8098C0"/><path fill="none" d="M2 7.5H13M2 10H13M5.5 5V12" stroke="#A0B0C8"/><path d="M8 12C8 9 11 8 13 9.5L12 8M13 9.5L11.5 11" stroke="#E0A020" stroke-width="2" fill="none"/></svg>
<svg style="left:761px;top:543px" width="16" height="16" viewBox="0 0 16 16"><path fill="none" d="M3 2V13M3 6H6M3 11H6" stroke="#B8B8B8"/><rect x="6.5" y="4.5" width="3" height="3" fill="#E8E8E8" stroke="#B0B0B0"/><rect x="6.5" y="9.5" width="3" height="3" fill="#E8E8E8" stroke="#B0B0B0"/><path d="M9 8L13 5V7H15V10H13V12Z" fill="#E8E8E8" stroke="#C0C0C0" stroke-width=".8"/></svg>
<svg style="left:786px;top:544px" width="10" height="6" viewBox="0 0 10 6"><path d="M0.5 0.5H9.5L5 5Z" fill="#fff" stroke="#706C5C"/></svg>
<div class="a" style="left:805px;top:544px;width:10px;height:4px;border:1px solid #505048;background:#fff"></div>
<div class="a" style="left:823px;top:544px;width:10px;height:10px;border:1px solid #505048;background:#fff"></div>
<div class="a" style="left:824px;top:546px;width:8px;height:1px;background:#505048"></div>
<div class="a" style="left:850px;top:113px;width:1px;height:1px;background:#A8A490"></div>
<div class="a" style="left:851px;top:114px;width:1px;height:1px;background:#fff"></div>
<div class="a" style="left:854px;top:113px;width:1px;height:1px;background:#A8A490"></div>
<div class="a" style="left:855px;top:114px;width:1px;height:1px;background:#fff"></div>
<div class="a" style="left:858px;top:113px;width:1px;height:1px;background:#A8A490"></div>
<div class="a" style="left:859px;top:114px;width:1px;height:1px;background:#fff"></div>
<div class="a" style="left:862px;top:113px;width:1px;height:1px;background:#A8A490"></div>
<div class="a" style="left:863px;top:114px;width:1px;height:1px;background:#fff"></div>
<svg style="left:850px;top:127px" width="10" height="10" viewBox="0 0 10 10"><rect x="3.5" y="0.5" width="6" height="5" fill="#fff" stroke="#505048"/><rect x="3.5" y="0.5" width="6" height="1.5" fill="#505048"/><rect x="0.5" y="3.5" width="6" height="5" fill="#fff" stroke="#505048"/><rect x="0.5" y="3.5" width="6" height="1.5" fill="#505048"/></svg>
<svg style="left:848px;top:145px" width="16" height="17" viewBox="0 0 16 17"><rect x="1.5" y="1.5" width="6" height="6" fill="#B8DCF8" stroke="#2878C8"/><rect x="1.5" y="10.5" width="6" height="6" fill="#B8DCF8" stroke="#2878C8"/><rect x="9.5" y="7.5" width="3" height="3" fill="#fff" stroke="#2878C8"/><path fill="none" d="M9 4.5H14M13 9.5H15M9 13.5H14" stroke="#204868"/></svg>
<svg style="left:848px;top:168px" width="16" height="16" viewBox="0 0 16 16"><circle cx="7.5" cy="7.5" r="6.3" fill="#fff" stroke="#40A060" stroke-width="1.2"/><circle cx="7.5" cy="7.5" r="3.8" fill="#D8F4E0" stroke="#40A060" stroke-width="1"/><circle cx="7.5" cy="7.5" r="2" fill="#108830"/></svg>
<svg style="left:849px;top:190px" width="13" height="16" viewBox="0 0 13 16"><defs><linearGradient id="dg" x1="0" y1="0" x2="0" y2="1"><stop offset="0" stop-color="#F4F4FC"/><stop offset="1" stop-color="#A8A0D8"/></linearGradient></defs><path d="M1.5 1.5H11.5V14L9 12.5L6.5 14.5L4 12.5L1.5 14Z" fill="url(#dg)" stroke="#484860"/><path fill="none" d="M3 4.5H10M3 6.5H10M3 8.5H10M3 10.5H10" stroke="#303050"/></svg>
<svg style="left:23px;top:59px" width="16" height="16" viewBox="0 0 16 16"><rect x="1.5" y="3.5" width="11" height="11" fill="#F8F8F0" stroke="#A09060"/><rect x="2" y="4" width="10" height="2" fill="#4070B0"/><rect x="2" y="6" width="10" height="8" fill="#FCF8D8"/><path fill="none" d="M12 0V6M9 3H15" stroke="#E0B020" stroke-width="1.6"/></svg>
<svg style="left:44px;top:65px" width="5" height="3" viewBox="0 0 5 3"><path d="M0 0H5L2.5 3Z" fill="#000"/></svg>
<svg style="left:58px;top:59px" width="16" height="16" viewBox="0 0 16 16"><rect x="1.5" y="1.5" width="13" height="13" fill="#E8E8E8" stroke="#B8B8B8"/><rect x="4" y="2" width="8" height="5" fill="#fff" stroke="#C0C0C0"/><rect x="4.5" y="9.5" width="7" height="5" fill="#D0D0D0" stroke="#B8B8B8"/></svg>
<svg style="left:81px;top:59px" width="16" height="16" viewBox="0 0 16 16"><rect x="4.5" y="1.5" width="7" height="5" fill="#fff" stroke="#B8B8B8"/><rect x="1.5" y="6.5" width="13" height="6" fill="#E0E0E0" stroke="#B0B0B0"/><rect x="2.5" y="12.5" width="11" height="2" fill="#C8C8C8"/></svg>
<svg style="left:113px;top:59px" width="16" height="16" viewBox="0 0 16 16"><path d="M2.5 0.5H10L13.5 4V15.5H2.5Z" fill="#fff" stroke="#7080A0"/><path fill="none" d="M4 3H9M4 5H8" stroke="#7090C0"/><text x="8" y="13.5" font-size="6.5" font-weight="bold" font-family="Liberation Mono" fill="#203060" text-anchor="middle">010</text></svg>
<svg style="left:152px;top:59px" width="16" height="16" viewBox="0 0 16 16"><path d="M1.5 5.5H13.5V15.5H1.5Z" fill="#70A0E0" stroke="#305090"/><rect x="2" y="6" width="11" height="3" fill="#A8C8F0"/><text x="7.5" y="14.5" font-size="8" font-weight="bold" font-family="Liberation Sans" fill="#204080" text-anchor="middle">C</text><path fill="none" d="M12 0.5V6.5M9 3.5H15" stroke="#E0B020" stroke-width="1.8"/></svg>
<svg style="left:173px;top:65px" width="5" height="3" viewBox="0 0 5 3"><path d="M0 0H5L2.5 3Z" fill="#000"/></svg>
<svg style="left:188px;top:59px" width="16" height="16" viewBox="0 0 16 16"><path d="M5.5 4.5H9L10 5.5H14.5V13.5H5.5Z" fill="#F8D880" stroke="#C09040"/><rect x="0.5" y="7.5" width="8" height="7" rx="1" fill="#80A8E0" stroke="#4068A8"/><text x="4.5" y="13.5" font-size="6.5" font-weight="bold" font-family="Liberation Sans" fill="#fff" text-anchor="middle">C</text><path fill="none" d="M12 0.5V6.5M9 3.5H15" stroke="#E0B020" stroke-width="1.8"/></svg>
<svg style="left:209px;top:65px" width="5" height="3" viewBox="0 0 5 3"><path d="M0 0H5L2.5 3Z" fill="#000"/></svg>
<svg style="left:224px;top:59px" width="16" height="16" viewBox="0 0 16 16"><path d="M2.5 2.5H10.5L12.5 4.5V15.5H2.5Z" fill="#F8F8FC" stroke="#8890A8"/><text x="7.5" y="13.5" font-size="8" font-weight="bold" font-family="Liberation Sans" fill="#2040A0" text-anchor="middle">C</text><path fill="none" d="M12 0.5V6.5M9 3.5H15" stroke="#E0B020" stroke-width="1.8"/></svg>
<svg style="left:245px;top:65px" width="5" height="3" viewBox="0 0 5 3"><path d="M0 0H5L2.5 3Z" fill="#000"/></svg>
<svg style="left:260px;top:59px" width="16" height="16" viewBox="0 0 16 16"><circle cx="7" cy="9" r="6" fill="#38A040" stroke="#206828"/><circle cx="7" cy="9" r="2.6" fill="#fff"/><rect x="7" y="8" width="5" height="3" fill="#38A040"/><path fill="none" d="M12 0.5V6.5M9 3.5H15" stroke="#E0B020" stroke-width="1.8"/></svg>
<svg style="left:281px;top:65px" width="5" height="3" viewBox="0 0 5 3"><path d="M0 0H5L2.5 3Z" fill="#000"/></svg>
<div class="a" style="left:306px;top:61px;width:1px;height:1px;background:#686860"></div>
<div class="a" style="left:307px;top:62px;width:1px;height:1px;background:#FFFFFF"></div>
<div class="a" style="left:306px;top:65px;width:1px;height:1px;background:#686860"></div>
<div class="a" style="left:307px;top:66px;width:1px;height:1px;background:#FFFFFF"></div>
<div class="a" style="left:306px;top:69px;width:1px;height:1px;background:#686860"></div>
<div class="a" style="left:307px;top:70px;width:1px;height:1px;background:#FFFFFF"></div>
<div class="a" style="left:306px;top:73px;width:1px;height:1px;background:#686860"></div>
<div class="a" style="left:307px;top:74px;width:1px;height:1px;background:#FFFFFF"></div>
<svg style="left:317px;top:59px" width="16" height="16" viewBox="0 0 16 16"><path fill="none" d="M7 7L13 14" stroke="#D8B898" stroke-width="3"/><path d="M2 5L6 1L10 4L7 8Z" fill="#A8A8A8" stroke="#909090" stroke-width=".6"/></svg>
<svg style="left:338px;top:65px" width="5" height="3" viewBox="0 0 5 3"><path d="M0 0H5L2.5 3Z" fill="#B8B4A8"/></svg>
<svg style="left:353px;top:59px" width="16" height="16" viewBox="0 0 16 16"><path d="M5 1.5H11L14.5 5V11L11 14.5H5L1.5 11V5Z" fill="#F0F0F0" stroke="#B0B0B0"/><circle cx="8" cy="8" r="4.5" fill="#fff" stroke="#B8B8B8"/><path fill="none" d="M4 4L8 8" stroke="#A0A0A0" stroke-width="1.5"/></svg>
<svg style="left:373px;top:65px" width="5" height="3" viewBox="0 0 5 3"><path d="M0 0H5L2.5 3Z" fill="#B8B4A8"/></svg>
<div class="a" style="left:392px;top:61px;width:1px;height:1px;background:#686860"></div>
<div class="a" style="left:393px;top:62px;width:1px;height:1px;background:#FFFFFF"></div>
<div class="a" style="left:392px;top:65px;width:1px;height:1px;background:#686860"></div>
<div class="a" style="left:393px;top:66px;width:1px;height:1px;background:#FFFFFF"></div>
<div class="a" style="left:392px;top:69px;width:1px;height:1px;background:#686860"></div>
<div class="a" style="left:393px;top:70px;width:1px;height:1px;background:#FFFFFF"></div>
<div class="a" style="left:392px;top:73px;width:1px;height:1px;background:#686860"></div>
<div class="a" style="left:393px;top:74px;width:1px;height:1px;background:#FFFFFF"></div>
<svg style="left:403px;top:59px" width="16" height="16" viewBox="0 0 16 16"><ellipse cx="8.5" cy="9" rx="4" ry="4.8" fill="#80C860" stroke="#305820"/><circle cx="8.5" cy="4" r="2" fill="#405830"/><path fill="none" d="M2 5L5 7M2 10H4.5M3 14L5 12M15 5L12 7M15 10H12.5M14 14L12 12M6 1L7.5 3M11 1L9.5 3" stroke="#203818" stroke-width="1.1"/></svg>
<svg style="left:425px;top:65px" width="5" height="3" viewBox="0 0 5 3"><path d="M0 0H5L2.5 3Z" fill="#000"/></svg>
<svg style="left:440px;top:59px" width="16" height="16" viewBox="0 0 16 16"><circle cx="8" cy="8" r="7.3" fill="#30A040" stroke="#207030"/><circle cx="7" cy="6" r="5" fill="#60C870" opacity=".5"/><path d="M6 4L12 8L6 12Z" fill="#fff"/></svg>
<svg style="left:461px;top:65px" width="5" height="3" viewBox="0 0 5 3"><path d="M0 0H5L2.5 3Z" fill="#000"/></svg>
<svg style="left:474px;top:59px" width="16" height="16" viewBox="0 0 16 16"><circle cx="6" cy="6" r="5.5" fill="#30A040" stroke="#207030"/><path d="M4.5 3L9 6L4.5 9Z" fill="#fff"/><rect x="7.5" y="10.5" width="8" height="5" fill="#D02828" stroke="#901818"/><path d="M10 10.5V9H13V10.5" stroke="#901818" fill="none"/></svg>
<svg style="left:497px;top:65px" width="5" height="3" viewBox="0 0 5 3"><path d="M0 0H5L2.5 3Z" fill="#000"/></svg>
<div class="a" style="left:516px;top:61px;width:1px;height:1px;background:#686860"></div>
<div class="a" style="left:517px;top:62px;width:1px;height:1px;background:#FFFFFF"></div>
<div class="a" style="left:516px;top:65px;width:1px;height:1px;background:#686860"></div>
<div class="a" style="left:517px;top:66px;width:1px;height:1px;background:#FFFFFF"></div>
<div class="a" style="left:516px;top:69px;width:1px;height:1px;background:#686860"></div>
<div class="a" style="left:517px;top:70px;width:1px;height:1px;background:#FFFFFF"></div>
<div class="a" style="left:516px;top:73px;width:1px;height:1px;background:#686860"></div>
<div class="a" style="left:517px;top:74px;width:1px;height:1px;background:#FFFFFF"></div>
<svg style="left:525px;top:59px" width="16" height="16" viewBox="0 0 16 16"><path d="M0.5 6.5H5L6 7.5H12.5V14.5H0.5Z" fill="#F0C870" stroke="#B08830"/><path d="M2.5 10.5H15.5L12.5 14.5H0.5Z" fill="#F8E0A0" stroke="#B08830"/><circle cx="7" cy="4" r="3.3" fill="#6858B8"/><circle cx="11" cy="7" r="3.3" fill="#30A050"/></svg>
<svg style="left:548px;top:59px" width="16" height="16" viewBox="0 0 16 16"><path d="M0.5 6.5H5L6 7.5H14.5V14.5H0.5Z" fill="#F0C870" stroke="#B08830"/><path d="M2.5 10.5H15.5L13.5 14.5H0.5Z" fill="#F8E0A0" stroke="#B08830"/><rect x="5.5" y="3.5" width="6" height="5" fill="#D8E0F0" stroke="#6878A0"/></svg>
<svg style="left:573px;top:59px" width="16" height="16" viewBox="0 0 16 16"><path d="M9 1L15 5L8 12L4 10Z" fill="#F0C060" stroke="#A08030" stroke-width=".8"/><path d="M4 10L8 12L5 15L1 14Z" fill="#F8F0C0" stroke="#A09060" stroke-width=".6"/><path fill="none" d="M5 8L9 11" stroke="#909090" stroke-width="2.5"/></svg>
<svg style="left:596px;top:65px" width="5" height="3" viewBox="0 0 5 3"><path d="M0 0H5L2.5 3Z" fill="#000"/></svg>
<div class="a" style="left:613px;top:61px;width:1px;height:1px;background:#686860"></div>
<div class="a" style="left:614px;top:62px;width:1px;height:1px;background:#FFFFFF"></div>
<div class="a" style="left:613px;top:65px;width:1px;height:1px;background:#686860"></div>
<div class="a" style="left:614px;top:66px;width:1px;height:1px;background:#FFFFFF"></div>
<div class="a" style="left:613px;top:69px;width:1px;height:1px;background:#686860"></div>
<div class="a" style="left:614px;top:70px;width:1px;height:1px;background:#FFFFFF"></div>
<div class="a" style="left:613px;top:73px;width:1px;height:1px;background:#686860"></div>
<div class="a" style="left:614px;top:74px;width:1px;height:1px;background:#FFFFFF"></div>
<svg style="left:624px;top:59px" width="16" height="16" viewBox="0 0 16 16"><rect x="1.5" y="1.5" width="13" height="13" fill="#F0F0F0" stroke="#C0C0C0"/><path fill="none" d="M7 3H12M8 3V13M10.5 3V13" stroke="#B0B0B0" stroke-width="1.2"/><circle cx="7" cy="5.5" r="2.5" fill="#B8B8B8"/></svg>
<svg style="left:648px;top:59px" width="16" height="16" viewBox="0 0 16 16"><rect x="1.5" y="1.5" width="9" height="13" fill="#F8F8F8" stroke="#C0C0C0"/><rect x="5.5" y="5.5" width="9" height="6" fill="#F8F8F8" stroke="#C0C0C0"/><path fill="none" d="M3 4H8M3 7H5M7 8H13M7 10H12M3 12H5" stroke="#C8C8C8"/></svg>
<svg style="left:22px;top:81px" width="16" height="16" viewBox="0 0 16 16"><rect x="6.5" y="2.5" width="8" height="12" fill="#F0F0F0" stroke="#C0C0C0"/><path fill="none" d="M8 5H13M8 7H13M8 9H13" stroke="#D0D0D0"/><path d="M3 1H7V7H9.5L5 12L0.5 7H3Z" fill="#E0E0E0" stroke="#B0B0B0" stroke-width=".8"/><rect x="2" y="12.5" width="6" height="2" fill="#B0B0B0"/></svg>
<svg style="left:45px;top:88px" width="5" height="3" viewBox="0 0 5 3"><path d="M0 0H5L2.5 3Z" fill="#B8B4A8"/></svg>
<svg style="left:58px;top:81px" width="16" height="16" viewBox="0 0 16 16"><rect x="5.5" y="1.5" width="9" height="12" fill="#F0F0F0" stroke="#C0C0C0"/><path fill="none" d="M7 4H13M7 6H13M7 8H13" stroke="#D0D0D0"/><path d="M3 15H7V9H9.5L5 4L0.5 9H3Z" fill="#E8E8E8" stroke="#B0B0B0" stroke-width=".8"/></svg>
<svg style="left:80px;top:88px" width="5" height="3" viewBox="0 0 5 3"><path d="M0 0H5L2.5 3Z" fill="#B8B4A8"/></svg>
<svg style="left:93px;top:81px" width="16" height="16" viewBox="0 0 16 16"><path d="M15 6H8V2.5L2 8.5L8 14.5V11H15Z" fill="#F8D870" stroke="#B89020" stroke-width="1"/><path fill="none" d="M1 1L5 5M5 1L1 5M3 0V6M0 3H6" stroke="#304880" stroke-width="1"/></svg>
<svg style="left:118px;top:81px" width="16" height="16" viewBox="0 0 16 16"><path d="M15 5.5H8V2L1.5 8L8 14V10.5H15Z" fill="#F8E088" stroke="#B89020" stroke-width="1"/></svg>
<svg style="left:139px;top:88px" width="5" height="3" viewBox="0 0 5 3"><path d="M0 0H5L2.5 3Z" fill="#000"/></svg>
<svg style="left:153px;top:81px" width="16" height="16" viewBox="0 0 16 16"><path d="M1 5.5H8V2L14.5 8L8 14V10.5H1Z" fill="#F4F4F4" stroke="#C0C0C0" stroke-width="1"/></svg>
<svg style="left:175px;top:88px" width="5" height="3" viewBox="0 0 5 3"><path d="M0 0H5L2.5 3Z" fill="#B8B4A8"/></svg>
<svg style="left:0px;top:0px" width="875" height="703" viewBox="0 0 875 703"><defs><linearGradient id="wl" gradientUnits="userSpaceOnUse" x1="380" y1="0" x2="640" y2="0"><stop offset="0" stop-color="#fff" stop-opacity="0"/><stop offset="1" stop-color="#fff" stop-opacity="1"/></linearGradient></defs><path fill="none" d="M300 102.5H672C690 102.5 688 52.5 710 52.5H871" stroke="url(#wl)" stroke-width="1"/></svg>
<svg style="left:719px;top:61px" width="14" height="13" viewBox="0 0 14 13"><rect x="0.5" y="1.5" width="11" height="11" fill="#fff" stroke="#505868"/><rect x="1" y="2" width="10" height="2" fill="#4070B0"/><path fill="none" d="M5.5 4V12M1 8H11" stroke="#505868"/><rect x="6" y="8.5" width="5" height="3.5" fill="#D8E8F8"/><path fill="none" d="M11 0V5M8.5 2.5H13.5" stroke="#E0B020" stroke-width="1.6"/></svg>
<svg style="left:741px;top:59px" width="16" height="16" viewBox="0 0 16 16"><rect x="1" y="0.5" width="7" height="9" rx="2" fill="#F0C020" stroke="#B08010"/><rect x="1.5" y="8.5" width="14" height="7" fill="#fff" stroke="#404870"/><rect x="2.5" y="9.5" width="12" height="5" fill="#304880"/><text x="8.5" y="14" font-size="5.5" font-weight="bold" font-family="Liberation Sans" fill="#fff" text-anchor="middle">CVS</text></svg>
<div class="t" style="left:760px;top:61px;letter-spacing:-0.205px;">CVS Reposito...</div>
<svg style="left:717px;top:81px" width="15" height="15" viewBox="0 0 15 15"><path d="M7.5 1C3 1 3.5 3 3.5 4V6H8V7H2C0 7 0 9 0.5 11C1 12.5 2 13 3 13V10C3 9 4 8 5 8H10C11 8 12 7 12 6V3C12 2 11 1 7.5 1Z" fill="#3C6EA0"/><path d="M7.5 15C12 15 11.5 13 11.5 12V10H7V9H13C15 9 15 7 14.5 5C14 3.5 13 3 12 3V6C12 7 11 8 10 8H5C4 8 3 9 3 10V13C3 14 4 15 7.5 15Z" fill="#F0C838"/></svg>
<div class="t" style="left:736px;top:82px;">Pydev</div>
<div class="a" style="left:774px;top:78px;width:65px;height:22px;border:1px solid #A8A494;border-radius:3px;background:linear-gradient(#FFFFFF,#F6F5F0)"></div>
<svg style="left:779px;top:81px" width="16" height="16" viewBox="0 0 16 16"><rect x="0.5" y="0.5" width="11" height="11" fill="#fff" stroke="#505868"/><rect x="1" y="1" width="10" height="2" fill="#8098B8"/><path fill="none" d="M5.5 3V11M1 7H11" stroke="#505868"/><rect x="6.5" y="5.5" width="9" height="10" fill="#D8E4F4" stroke="#404860"/><text x="11" y="13.5" font-size="8" font-weight="bold" font-family="Liberation Sans" fill="#203880" text-anchor="middle">C</text></svg>
<div class="t" style="left:798px;top:83px;letter-spacing:0.776px;">C/C++</div>
<svg style="left:23px;top:674px" width="16" height="16" viewBox="0 0 16 16"><rect x="0.5" y="3.5" width="6" height="11" fill="#E8F0FC" stroke="#707060"/><rect x="1" y="4" width="5" height="2" fill="#4878B8"/><path d="M10.5 1L14 4.5L10.5 8L7 4.5Z" fill="#FFF8C0" stroke="#D0B030" stroke-width="1"/></svg>
</body></html>
